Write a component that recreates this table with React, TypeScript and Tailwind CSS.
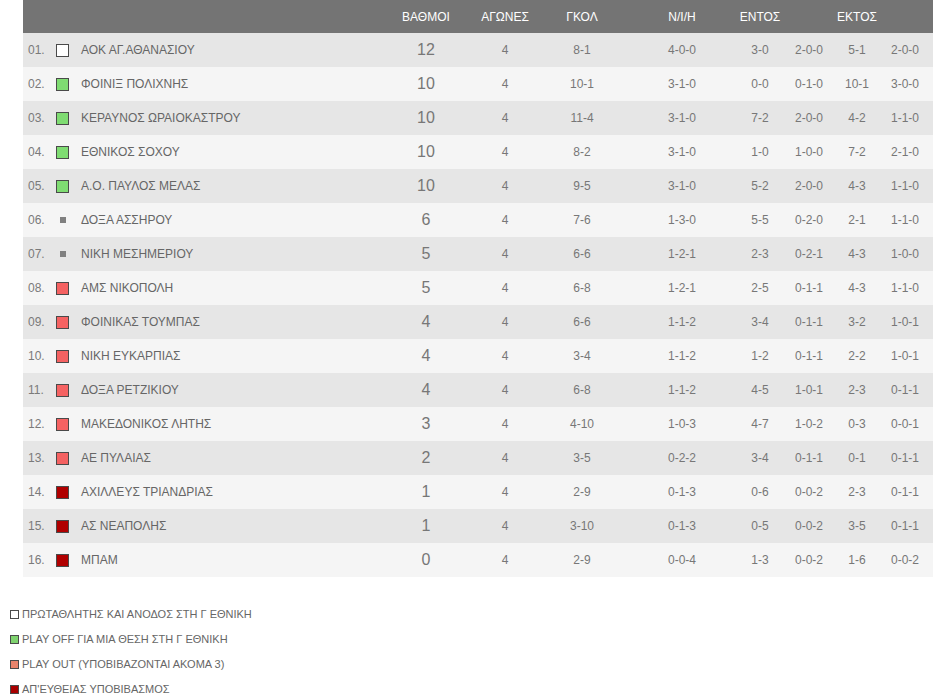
import React from "react";

type Row = {
  pos: string;
  kind: "w" | "g" | "s" | "r" | "d";
  name: string;
  pts: string;
  gp: string;
  goals: string;
  wdl: string;
  hg: string;
  hr: string;
  ag: string;
  ar: string;
};

const rows: Row[] = [
  { pos: "01.", kind: "w", name: "ΑΟΚ ΑΓ.ΑΘΑΝΑΣΙΟΥ", pts: "12", gp: "4", goals: "8-1", wdl: "4-0-0", hg: "3-0", hr: "2-0-0", ag: "5-1", ar: "2-0-0" },
  { pos: "02.", kind: "g", name: "ΦΟΙΝΙΞ ΠΟΛΙΧΝΗΣ", pts: "10", gp: "4", goals: "10-1", wdl: "3-1-0", hg: "0-0", hr: "0-1-0", ag: "10-1", ar: "3-0-0" },
  { pos: "03.", kind: "g", name: "ΚΕΡΑΥΝΟΣ ΩΡΑΙΟΚΑΣΤΡΟΥ", pts: "10", gp: "4", goals: "11-4", wdl: "3-1-0", hg: "7-2", hr: "2-0-0", ag: "4-2", ar: "1-1-0" },
  { pos: "04.", kind: "g", name: "ΕΘΝΙΚΟΣ ΣΟΧΟΥ", pts: "10", gp: "4", goals: "8-2", wdl: "3-1-0", hg: "1-0", hr: "1-0-0", ag: "7-2", ar: "2-1-0" },
  { pos: "05.", kind: "g", name: "Α.Ο. ΠΑΥΛΟΣ ΜΕΛΑΣ", pts: "10", gp: "4", goals: "9-5", wdl: "3-1-0", hg: "5-2", hr: "2-0-0", ag: "4-3", ar: "1-1-0" },
  { pos: "06.", kind: "s", name: "ΔΟΞΑ ΑΣΣΗΡΟΥ", pts: "6", gp: "4", goals: "7-6", wdl: "1-3-0", hg: "5-5", hr: "0-2-0", ag: "2-1", ar: "1-1-0" },
  { pos: "07.", kind: "s", name: "ΝΙΚΗ ΜΕΣΗΜΕΡΙΟΥ", pts: "5", gp: "4", goals: "6-6", wdl: "1-2-1", hg: "2-3", hr: "0-2-1", ag: "4-3", ar: "1-0-0" },
  { pos: "08.", kind: "r", name: "ΑΜΣ ΝΙΚΟΠΟΛΗ", pts: "5", gp: "4", goals: "6-8", wdl: "1-2-1", hg: "2-5", hr: "0-1-1", ag: "4-3", ar: "1-1-0" },
  { pos: "09.", kind: "r", name: "ΦΟΙΝΙΚΑΣ ΤΟΥΜΠΑΣ", pts: "4", gp: "4", goals: "6-6", wdl: "1-1-2", hg: "3-4", hr: "0-1-1", ag: "3-2", ar: "1-0-1" },
  { pos: "10.", kind: "r", name: "ΝΙΚΗ ΕΥΚΑΡΠΙΑΣ", pts: "4", gp: "4", goals: "3-4", wdl: "1-1-2", hg: "1-2", hr: "0-1-1", ag: "2-2", ar: "1-0-1" },
  { pos: "11.", kind: "r", name: "ΔΟΞΑ ΡΕΤΖΙΚΙΟΥ", pts: "4", gp: "4", goals: "6-8", wdl: "1-1-2", hg: "4-5", hr: "1-0-1", ag: "2-3", ar: "0-1-1" },
  { pos: "12.", kind: "r", name: "ΜΑΚΕΔΟΝΙΚΟΣ ΛΗΤΗΣ", pts: "3", gp: "4", goals: "4-10", wdl: "1-0-3", hg: "4-7", hr: "1-0-2", ag: "0-3", ar: "0-0-1" },
  { pos: "13.", kind: "r", name: "ΑΕ ΠΥΛΑΙΑΣ", pts: "2", gp: "4", goals: "3-5", wdl: "0-2-2", hg: "3-4", hr: "0-1-1", ag: "0-1", ar: "0-1-1" },
  { pos: "14.", kind: "d", name: "ΑΧΙΛΛΕΥΣ ΤΡΙΑΝΔΡΙΑΣ", pts: "1", gp: "4", goals: "2-9", wdl: "0-1-3", hg: "0-6", hr: "0-0-2", ag: "2-3", ar: "0-1-1" },
  { pos: "15.", kind: "d", name: "ΑΣ ΝΕΑΠΟΛΗΣ", pts: "1", gp: "4", goals: "3-10", wdl: "0-1-3", hg: "0-5", hr: "0-0-2", ag: "3-5", ar: "0-1-1" },
  { pos: "16.", kind: "d", name: "ΜΠΑΜ", pts: "0", gp: "4", goals: "2-9", wdl: "0-0-4", hg: "1-3", hr: "0-0-2", ag: "1-6", ar: "0-0-2" },
];

function Marker({ kind }: { kind: Row["kind"] }) {
  if (kind === "s") return <span className="block w-[6px] h-[6px] bg-[#808080]" />;
  const fill =
    kind === "w" ? "bg-white" : kind === "g" ? "bg-[#7fdc72]" : kind === "r" ? "bg-[#f56262]" : "bg-[#b00000]";
  return <span className={`block w-[13px] h-[13px] border-[1.5px] border-[#4a4a4a] ${fill}`} />;
}

function Cells({
  pts,
  gp,
  goals,
  wdl,
  hg,
  hr,
  ag,
  ar,
  header,
}: {
  pts: React.ReactNode;
  gp: React.ReactNode;
  goals: React.ReactNode;
  wdl: React.ReactNode;
  hg: React.ReactNode;
  hr: React.ReactNode;
  ag: React.ReactNode;
  ar: React.ReactNode;
  header?: boolean;
}) {
  const num = header ? "text-[12px] text-white" : "text-[12px] text-[#777]";
  return (
    <>
      <div className={`w-[60px] flex justify-center whitespace-nowrap ${header ? num : "text-[16px] text-[#777]"}`}>{pts}</div>
      <div className={`ml-[19px] w-[60px] flex justify-center whitespace-nowrap ${num}`}>{gp}</div>
      <div className={`ml-[17px] w-[60px] flex justify-center whitespace-nowrap ${num}`}>{goals}</div>
      <div className={`ml-[40px] w-[60px] flex justify-center whitespace-nowrap ${num}`}>{wdl}</div>
      <div className={`ml-[24px] w-[48px] flex justify-center whitespace-nowrap ${num}`}>{hg}</div>
      <div className={`ml-[1px] w-[48px] flex justify-center whitespace-nowrap ${num}`}>{hr}</div>
      <div className={`w-[48px] flex justify-center whitespace-nowrap ${num}`}>{ag}</div>
      <div className={`w-[48px] flex justify-center whitespace-nowrap ${num}`}>{ar}</div>
    </>
  );
}

const legend: { fill: string; text: string }[] = [
  { fill: "bg-white", text: "ΠΡΩΤΑΘΛΗΤΗΣ ΚΑΙ ΑΝΟΔΟΣ ΣΤΗ Γ ΕΘΝΙΚΗ" },
  { fill: "bg-[#7fd36f]", text: "PLAY OFF ΓΙΑ ΜΙΑ ΘΕΣΗ ΣΤΗ Γ ΕΘΝΙΚΗ" },
  { fill: "bg-[#e9846c]", text: "PLAY OUT (ΥΠΟΒΙΒΑΖΟΝΤΑΙ ΑΚΟΜΑ 3)" },
  { fill: "bg-[#a80000]", text: "ΑΠ'ΕΥΘΕΙΑΣ ΥΠΟΒΙΒΑΣΜΟΣ" },
];

export default function App() {
  return (
    <div className="w-[937px] h-[696px] bg-white overflow-hidden" style={{ fontFamily: '"Liberation Sans", Arial, sans-serif' }}>
      <div className="ml-[23px] w-[910px]">
        <div className="h-[33px] bg-[#747474] flex items-center">
          <div className="w-[373px]" />
          <Cells header pts="ΒΑΘΜΟΙ" gp="ΑΓΩΝΕΣ" goals="ΓΚΟΛ" wdl="Ν/Ι/Η" hg="ΕΝΤΟΣ" hr="" ag="ΕΚΤΟΣ" ar="" />
        </div>
        {rows.map((r, i) => (
          <div key={r.pos} className={`h-[34px] flex items-center ${i % 2 === 0 ? "bg-[#e6e6e6]" : "bg-[#f5f5f5]"}`}>
            <div className="w-[27px] pl-[5px] text-[12px] text-[#7a7a7a]">{r.pos}</div>
            <div className="w-[25px] flex justify-center">
              <Marker kind={r.kind} />
            </div>
            <div className="w-[321px] pl-[6px] text-[12px] text-[#666] whitespace-nowrap">{r.name}</div>
            <Cells pts={r.pts} gp={r.gp} goals={r.goals} wdl={r.wdl} hg={r.hg} hr={r.hr} ag={r.ag} ar={r.ar} />
          </div>
        ))}
      </div>
      <div className="mt-[30px] ml-[10px] flex flex-col gap-[11px]">
        {legend.map((l) => (
          <div key={l.text} className="flex items-center h-[14px]">
            <span className={`block w-[9px] h-[9px] border-[1.5px] border-[#4a4a4a] ${l.fill}`} />
            <span className="ml-[3px] text-[11px] text-[#666] whitespace-nowrap">{l.text}</span>
          </div>
        ))}
      </div>
    </div>
  );
}
